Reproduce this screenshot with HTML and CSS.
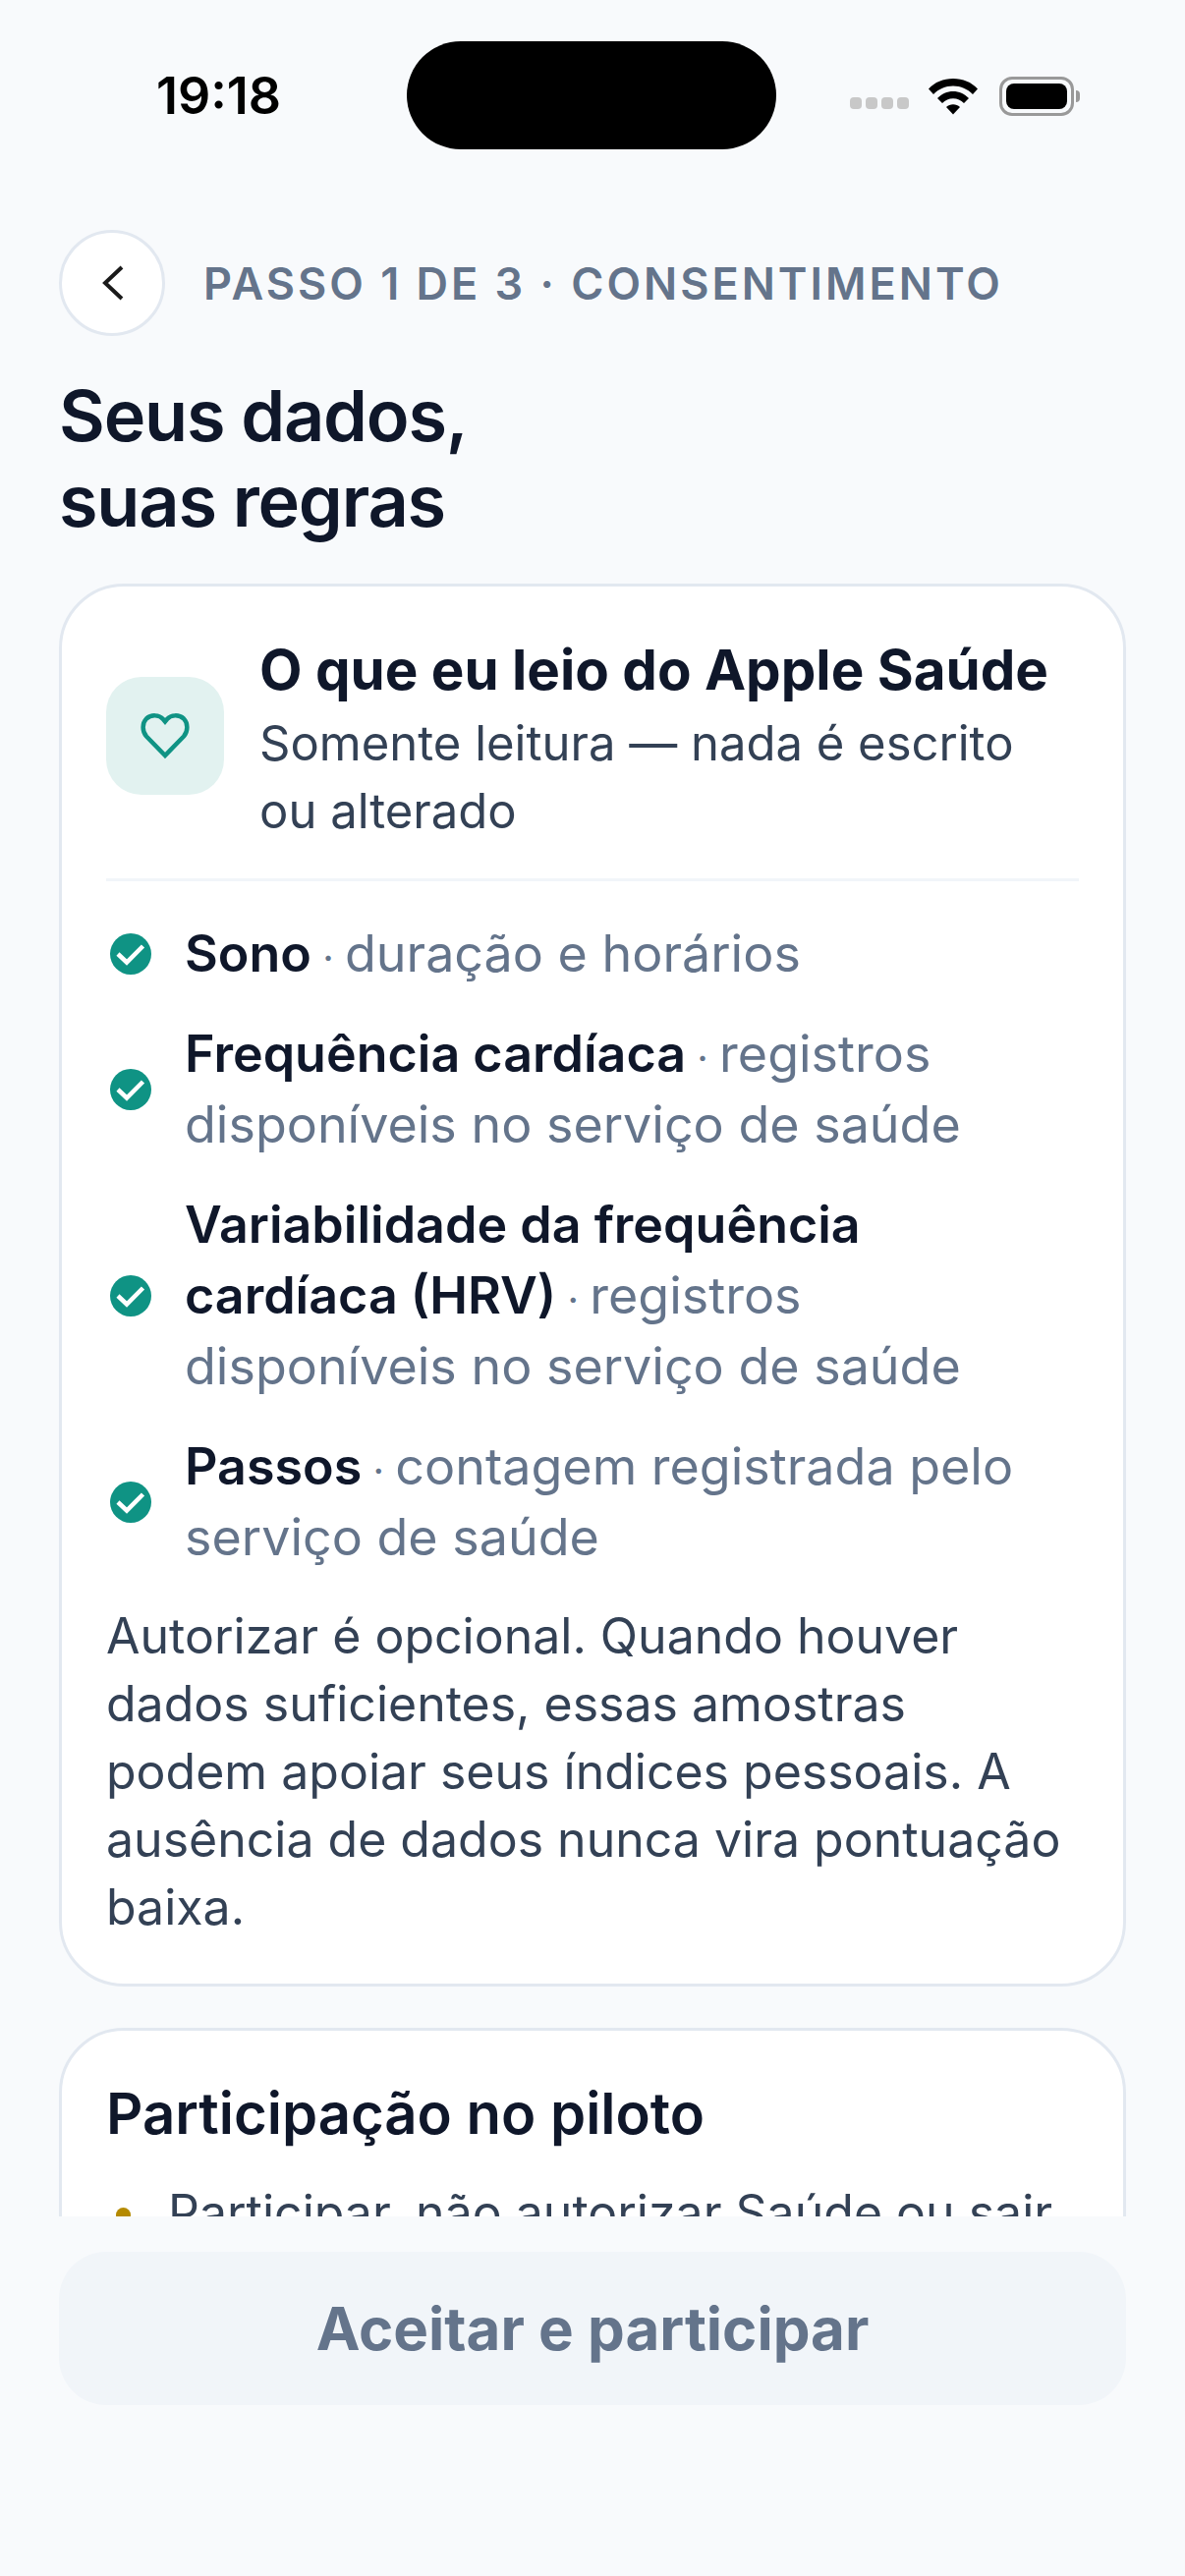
FILE: index.html
```html
<!DOCTYPE html>
<html lang="pt-BR">
<head>
  <meta charset="UTF-8">
  <title>Consentimento</title>
  <link rel="stylesheet" href="styles.css">
</head>
<body>
  <div class="phone">
    <div class="status-bar">
      <span class="time">19:18</span>
      <div class="island"></div>
      <div class="status-icons">
        <div class="signal"><i></i><i></i><i></i><i></i></div>
        <svg class="wifi" width="52" height="38" viewBox="0 0 52 38">
          <path d="M1 11.500C7.500 4.500 16 1 26 1s18.500 3.500 25 10.500l-5 5.500C40.500 11.500 34 8.500 26 8.500S11.500 11.500 6 17z" fill="#000"/>
          <path d="M10 21c4.500-4.500 10-7 16-7s11.500 2.500 16 7l-5 5c-3-3-6.800-4.700-11-4.700S18 23 15 26z" fill="#000"/>
          <path d="M19 30c2-1.800 4.400-2.800 7-2.800s5 1 7 2.800l-7 7.500z" fill="#000"/>
        </svg>
        <div class="battery"><div class="battery-fill"></div></div>
        <div class="battery-cap"></div>
      </div>
    </div>

    <div class="content">
      <div class="top-row">
        <button class="back-button">
          <svg width="36" height="42" viewBox="0 0 36 42" fill="none">
            <path d="M28 5L11 21l17 16" stroke="#1a1a1a" stroke-width="4"/>
          </svg>
        </button>
        <span class="step-label">PASSO 1 DE 3 · CONSENTIMENTO</span>
      </div>

      <h1 class="title">Seus dados,<br>suas regras</h1>

      <div class="card">
        <div class="card-head">
          <div class="heart-box">
            <svg width="54" height="48" viewBox="0 0 54 48" fill="none">
              <path d="M27 44L8 24.500C3.500 19.500 3.500 11 8 6.500C13 2 21 2.500 25 7L27 9.500L29 7C33 2.500 41 2 46 6.500C50.500 11 50.500 19.500 46 24.500Z" stroke="#0f9384" stroke-width="4.500"/>
            </svg>
          </div>
          <div>
            <div class="card-title">O que eu leio do Apple Saúde</div>
            <div class="card-sub">Somente leitura — nada é escrito ou alterado</div>
          </div>
        </div>

        <ul class="check-list">
          <li>
            <svg class="check" viewBox="0 0 42 42"><circle cx="21" cy="21" r="21" fill="#0f9384"/><path d="M8 21l9 8.500L33.500 13" fill="none" stroke="#fff" stroke-width="4.500"/></svg>
            <span><b>Sono</b><span class="sep"> · </span>duração e horários</span>
          </li>
          <li>
            <svg class="check" viewBox="0 0 42 42"><circle cx="21" cy="21" r="21" fill="#0f9384"/><path d="M8 21l9 8.500L33.500 13" fill="none" stroke="#fff" stroke-width="4.500"/></svg>
            <span><b>Frequência cardíaca</b><span class="sep"> · </span>registros disponíveis no serviço de saúde</span>
          </li>
          <li>
            <svg class="check" viewBox="0 0 42 42"><circle cx="21" cy="21" r="21" fill="#0f9384"/><path d="M8 21l9 8.500L33.500 13" fill="none" stroke="#fff" stroke-width="4.500"/></svg>
            <span><b>Variabilidade da frequência cardíaca (HRV)</b><span class="sep"> · </span>registros disponíveis no serviço de saúde</span>
          </li>
          <li>
            <svg class="check" viewBox="0 0 42 42"><circle cx="21" cy="21" r="21" fill="#0f9384"/><path d="M8 21l9 8.500L33.500 13" fill="none" stroke="#fff" stroke-width="4.500"/></svg>
            <span><b>Passos</b><span class="sep"> · </span>contagem registrada pelo serviço de saúde</span>
          </li>
        </ul>

        <p class="card-note">Autorizar é opcional. Quando houver dados suficientes, essas amostras podem apoiar seus índices pessoais. A ausência de dados nunca vira pontuação baixa.</p>
      </div>

      <div class="card">
        <div class="card-heading">Participação no piloto</div>
        <div class="bullet-row">
          <span class="bullet"></span>
          <span>Participar, não autorizar Saúde ou sair do piloto não muda seu acesso.</span>
        </div>
      </div>
    </div>

    <div class="footer">
      <button class="accept-button">Aceitar e participar</button>
    </div>
  </div>
</body>
</html>
```

FILE: styles.css
```css
* {
  box-sizing: border-box;
}

body {
  margin: 0;
  background-color: #f8fafc;
  font-family: 'Inter', sans-serif;
}

.phone {
  width: 1206px;
  height: 2622px;
  display: flex;
  flex-direction: column;
  background-color: #f8fafc;
  overflow: hidden;
}

/* status bar */
.status-bar {
  height: 234px;
  flex-shrink: 0;
  display: flex;
  align-items: flex-start;
  padding-top: 42px;
}

.time {
  width: 414px;
  padding-left: 31px;
  padding-top: 27px;
  text-align: center;
  font-size: 52px;
  font-weight: 600;
  line-height: 58px;
  color: #000;
}

.island {
  width: 376px;
  height: 110px;
  border-radius: 55px;
  background: #000;
}

.status-icons {
  display: flex;
  align-items: center;
  margin-left: 75px;
  margin-top: 36px;
}

.signal {
  display: flex;
  gap: 4px;
  margin-top: 14px;
  margin-right: 19px;
}

.signal i {
  width: 12px;
  height: 12px;
  border-radius: 4px;
  background: #c8c8c8;
}

.wifi {
  margin-right: 21px;
}

.battery {
  width: 76px;
  height: 40px;
  padding: 4px;
  border: 3px solid #999;
  border-radius: 13px;
}

.battery-fill {
  height: 100%;
  border-radius: 8px;
  background: #000;
}

.battery-cap {
  width: 4px;
  height: 12px;
  margin-left: 2px;
  border-radius: 0 4px 4px 0;
  background: #999;
}

/* scrolling part */
.content {
  flex: 1;
  min-height: 0;
  overflow: hidden;
  padding: 0 60px;
}

.top-row {
  display: flex;
  align-items: center;
  gap: 39px;
}

.back-button {
  width: 108px;
  height: 108px;
  padding: 0;
  display: flex;
  align-items: center;
  justify-content: center;
  background: #fff;
  border: 3px solid #e2e8f0;
  border-radius: 50%;
}

.step-label {
  font-size: 45px;
  font-weight: 600;
  letter-spacing: 3px;
  color: #64748b;
}

.title {
  margin: 37px 0 41px;
  font-size: 72px;
  line-height: 87px;
  font-weight: 600;
  letter-spacing: -1.200px;
  color: #0f172a;
}

.card {
  padding: 45px 45px 43px;
  margin-bottom: 42px;
  background: #fff;
  border: 3px solid #e2e8f0;
  border-radius: 66px;
}

.card-head {
  display: flex;
  align-items: center;
  gap: 36px;
  padding-bottom: 34px;
  margin-bottom: 38px;
  border-bottom: 3px solid #f1f5f9;
}

.heart-box {
  width: 120px;
  height: 120px;
  flex-shrink: 0;
  display: flex;
  align-items: center;
  justify-content: center;
  margin-top: -4px;
  border-radius: 36px;
  background: #e2f2f0;
}

.card-title {
  font-size: 56.500px;
  line-height: 80px;
  font-weight: 700;
  color: #0f172a;
}

.card-sub {
  font-size: 49px;
  line-height: 69px;
  color: #334155;
}

.check-list {
  list-style: none;
  margin: 0;
  padding: 0;
  display: flex;
  flex-direction: column;
  gap: 30px;
}

.check-list li {
  display: flex;
  align-items: center;
  gap: 34px;
  padding-left: 4px;
  font-size: 52px;
  line-height: 72px;
  color: #64748b;
}

.check-list b {
  font-weight: 600;
  color: #0f172a;
}

.sep {
  font-size: 40px;
  line-height: 0;
}

.check {
  width: 42px;
  height: 42px;
  flex-shrink: 0;
}

.card-note {
  margin: 30px 0 0;
  font-size: 50px;
  line-height: 69px;
  color: #334155;
}

.card-heading {
  font-size: 58px;
  line-height: 78px;
  font-weight: 600;
  color: #0f172a;
}

.bullet-row {
  display: flex;
  align-items: flex-start;
  gap: 38px;
  margin-top: 28px;
  padding-left: 10px;
  font-size: 50px;
  line-height: 69px;
  color: #334155;
}

.bullet {
  width: 15px;
  height: 15px;
  flex-shrink: 0;
  margin-top: 29px;
  border-radius: 50%;
  background: #b58a00;
}

/* bottom action */
.footer {
  height: 366px;
  flex-shrink: 0;
  padding: 36px 60px 0;
  background-color: #f8fafc;
}

.accept-button {
  width: 100%;
  height: 156px;
  border: none;
  border-radius: 48px;
  background: #f1f5f9;
  font-family: 'Inter', sans-serif;
  font-size: 60px;
  font-weight: 700;
  color: #64748b;
}
```
